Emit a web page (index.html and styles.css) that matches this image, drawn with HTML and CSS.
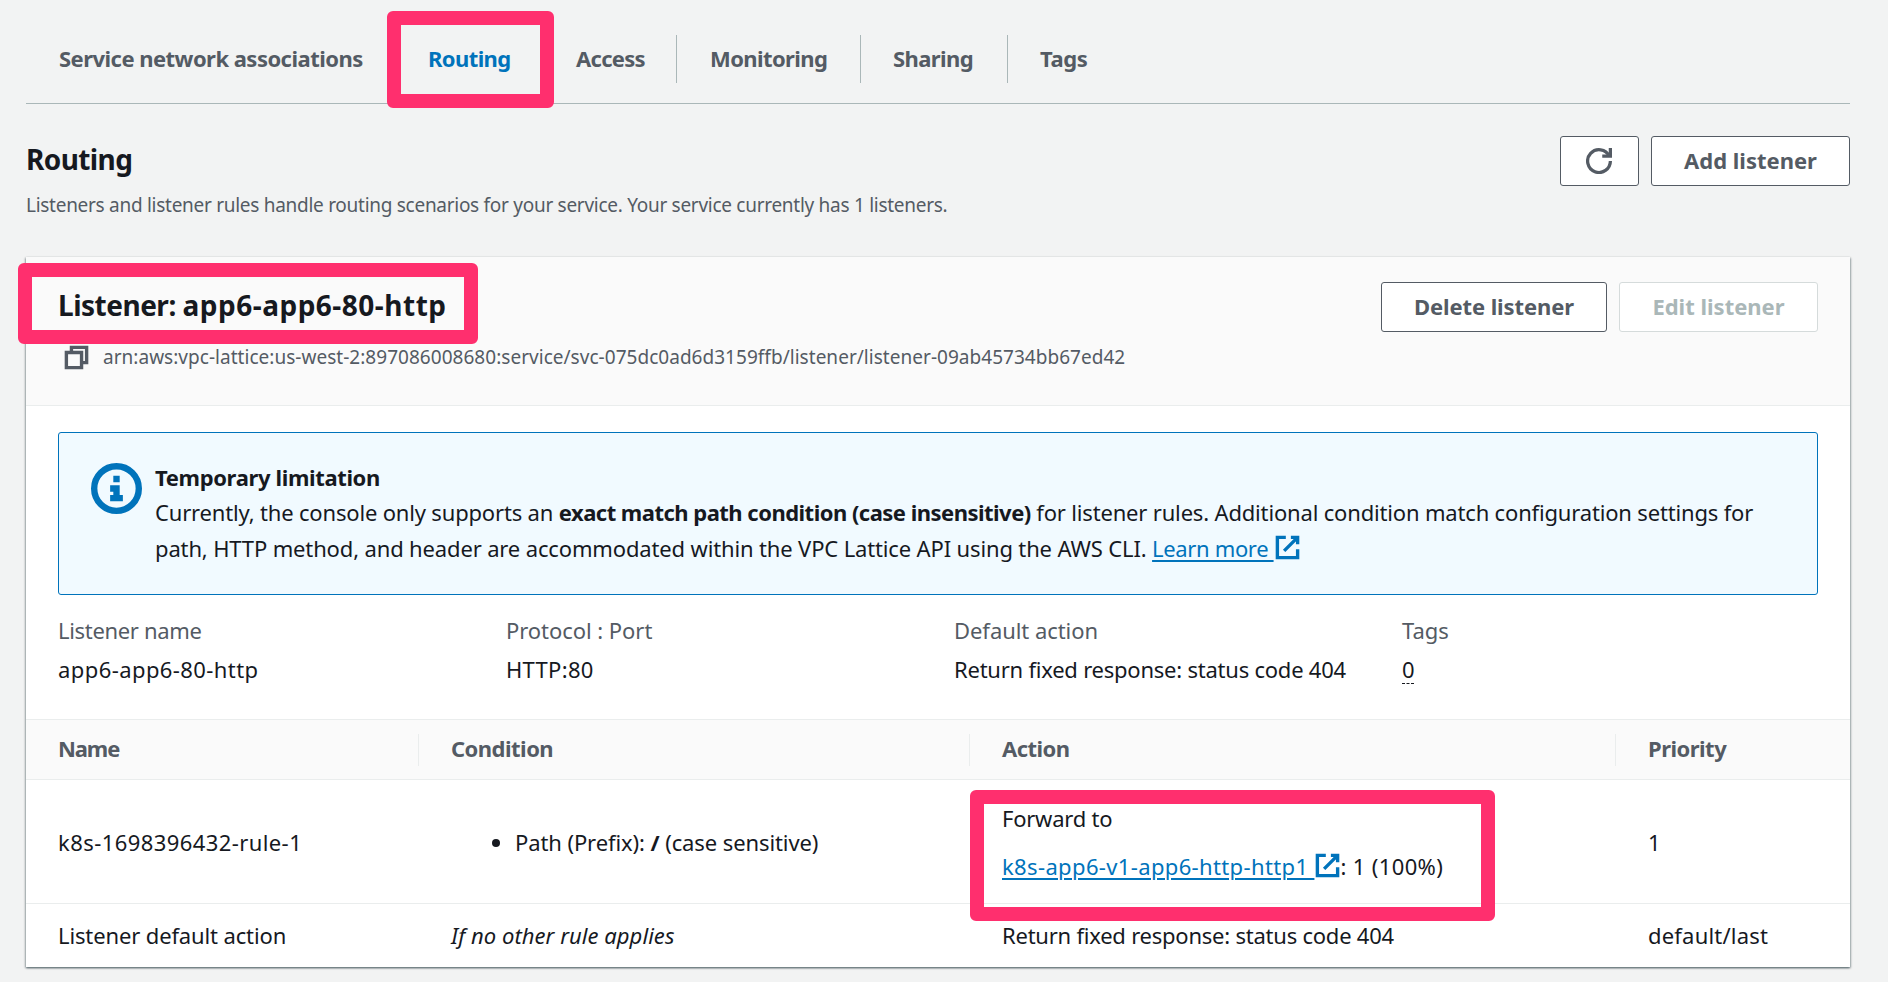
FILE: index.html
```html
<!DOCTYPE html>
<html lang="en">
<head>
<meta charset="utf-8">
<title>Routing</title>
<link rel="stylesheet" href="styles.css">
</head>
<body>
<main class="page">
  <nav class="tabs">
    <a class="tab tab-assoc">Service network associations</a>
    <a class="tab tab-routing active">Routing</a>
    <a class="tab tab-access">Access</a>
    <a class="tab tab-monitoring">Monitoring</a>
    <a class="tab tab-sharing">Sharing</a>
    <a class="tab tab-tags">Tags</a>
  </nav>

  <header class="page-header">
    <div>
      <h1 class="page-title">Routing</h1>
      <p class="page-desc">Listeners and listener rules handle routing scenarios for your service. Your service currently has 1 listeners.</p>
    </div>
    <div class="actions">
      <button class="btn btn-icon" aria-label="Refresh"><svg class="icon-refresh" viewBox="0 0 16 16"><path d="M10 5h5V0"/><path d="M15 8a7 7 0 1 1-.7-3"/></svg></button>
      <button class="btn btn-add">Add listener</button>
    </div>
  </header>

  <section class="panel">
    <header class="panel-header">
      <div>
        <h2 class="panel-title">Listener: <span class="panel-name">app6-app6-80-http</span></h2>
        <div class="arn"><svg class="icon-copy" viewBox="0 0 16 16"><path d="M2 5h9v9H2z"/><path d="M5 5V2h9v9h-3"/></svg><span class="arn-text">arn:aws:vpc-lattice:us-west-2:897086008680:service/svc-075dc0ad6d3159ffb/listener/listener-09ab45734bb67ed42</span></div>
      </div>
      <div class="actions">
        <button class="btn btn-delete">Delete listener</button>
        <button class="btn btn-edit" disabled>Edit listener</button>
      </div>
    </header>

    <div class="alert">
      <svg class="icon-info" viewBox="0 0 16 16"><circle cx="8" cy="8" r="7"/><path d="M8 11V8H6M10 11H6M8 6V4"/></svg>
      <div class="alert-body">
        <div class="alert-title">Temporary limitation</div>
        <div class="alert-line1">Currently, the console only supports an <b>exact match path condition (case insensitive)</b> for listener rules. Additional condition match configuration settings for</div>
        <div class="alert-line2">path, HTTP method, and header are accommodated within the VPC Lattice API using the AWS CLI. <a class="link">Learn more </a><svg class="icon-ext" viewBox="0 0 16 16"><path d="M10 2h4v4M6 10l8-8M14 9v5H2V2h5"/></svg></div>
      </div>
    </div>

    <dl class="details">
      <div><dt class="listener-label">Listener name</dt><dd class="code">app6-app6-80-http</dd></div>
      <div><dt>Protocol : Port</dt><dd class="port">HTTP:80</dd></div>
      <div><dt>Default action</dt><dd>Return fixed response: status code 404</dd></div>
      <div><dt>Tags</dt><dd><span class="tag-count">0</span></dd></div>
    </dl>

    <div class="table">
      <div class="row head">
        <div class="cell head-name">Name</div><div class="cell">Condition</div><div class="cell">Action</div><div class="cell">Priority</div>
      </div>
      <div class="row rule">
        <div class="cell code">k8s-1698396432-rule-1</div>
        <div class="cell"><ul class="conditions"><li>Path (Prefix): <b>/</b> (case sensitive)</li></ul></div>
        <div class="cell action"><div>Forward to</div><div class="target"><a class="link">k8s-app6-v1-app6-http-http1 </a><svg class="icon-ext" viewBox="0 0 16 16"><path d="M10 2h4v4M6 10l8-8M14 9v5H2V2h5"/></svg>: 1 (100%)</div></div>
        <div class="cell">1</div>
      </div>
      <div class="row default">
        <div class="cell default-name">Listener default action</div>
        <div class="cell default-condition"><i>If no other rule applies</i></div>
        <div class="cell">Return fixed response: status code 404</div>
        <div class="cell default-priority">default/last</div>
      </div>
    </div>
  </section>

  <div class="mark mark-tab"></div>
  <div class="mark mark-title"></div>
  <div class="mark mark-action"></div>
</main>
</body>
</html>
```
FILE: styles.css
```css
* { box-sizing: border-box; }
body {
  margin: 0;
  background: #f2f3f3;
  color: #16191f;
  font: 22px/35px "Noto Sans", "Open Sans", sans-serif;
  letter-spacing: -0.23px;
  white-space: nowrap;
}
h1, h2, p, dl, dd, ul { margin: 0; padding: 0; }
svg { fill: none; stroke: currentColor; stroke-width: 2; flex: none; }

.page { position: relative; height: 982px; padding: 0 38px 0 26px; overflow: hidden; }

.tabs { display: flex; height: 104px; padding-top: 35px; border-bottom: 1px solid #aab7b8; }
.tab { height: 48px; line-height: 46px; padding-left: 33px; color: #545b64; font-weight: 700; letter-spacing: -0.6px; border-right: 1px solid #aab7b8; }
.tab-assoc { width: 369px; letter-spacing: -0.53px; border-color: transparent; }
.tab-routing { width: 148px; }
.tab-access { width: 134px; letter-spacing: -0.7px; }
.tab-monitoring { width: 184px; }
.tab-sharing { width: 147px; padding-left: 32px; }
.tab-tags { padding-left: 32px; letter-spacing: -0.4px; border: 0; }
.tab.active { color: #0073bb; border-color: transparent; }

.page-header { display: flex; justify-content: space-between; height: 153px; padding-top: 32px; }
.page-title { font-size: 28px; line-height: 46px; letter-spacing: -0.6px; }
.page-desc { margin-top: 6px; font-size: 19px; line-height: 35px; letter-spacing: -0.28px; color: #545b64; }
.actions { display: flex; gap: 12px; }
.btn {
  height: 50px;
  padding: 0 0 2px;
  background: #fff;
  border: 1px solid #545b64;
  border-radius: 3px;
  color: #545b64;
  font: 700 22px/46px "Noto Sans", "Open Sans", sans-serif;
  letter-spacing: 0;
}
.btn-icon { width: 79px; display: flex; align-items: center; justify-content: center; padding: 0 2px 0 0; }
.btn-add, .btn-edit { width: 199px; }
.btn-delete { width: 226px; letter-spacing: -0.1px; }
.btn:disabled { color: #aab7b8; border-color: #d5dbdb; }
.icon-refresh { width: 26px; height: 26px; }

.panel { height: 710px; background: #fff; box-shadow: 0 1px 2px rgba(0, 28, 36, .5), 1px 1px 2px rgba(0, 28, 36, .2), -1px 1px 2px rgba(0, 28, 36, .2); }
.panel-header { display: flex; justify-content: space-between; height: 149px; padding: 25px 32px 0; background: #fafafa; border-bottom: 1px solid #eaeded; }
.panel-title { font-size: 28px; line-height: 47px; letter-spacing: -0.5px; }
.panel-name { letter-spacing: 0.5px; }
.arn { display: flex; align-items: center; height: 34px; padding-left: 5px; margin-top: 11px; font-size: 19px; letter-spacing: 0.03px; color: #545b64; }
.arn-text { margin-left: 13px; }
.icon-copy { width: 27px; height: 27px; }

.alert { display: flex; height: 163px; margin: 26px 32px 0; padding: 27px 0 0 32px; background: #f1faff; border: 1px solid #0073bb; border-radius: 3px; }
.icon-info { width: 51px; height: 51px; margin-top: 3px; color: #0073bb; }
.alert-body { margin-left: 13px; line-height: 35.3px; }
.alert-title { font-weight: 700; letter-spacing: -0.36px; }
.alert-line1 { letter-spacing: -0.17px; }
.alert-line1 b { letter-spacing: -0.52px; }
.alert-line2 { letter-spacing: -0.145px; }
.alert-line2 .link { letter-spacing: -0.35px; }
.link { color: #0073bb; text-decoration: underline; text-decoration-thickness: 2px; text-underline-offset: 3px; white-space: pre; }
.icon-ext { width: 27px; height: 27px; margin: 0 -1px 0 0; color: #0073bb; vertical-align: -4px; }

.details { display: grid; grid-template-columns: repeat(3, 448px) auto; height: 124px; padding: 18px 32px 0; }
.details dt { color: #545b64; letter-spacing: -0.05px; }
.details .listener-label { letter-spacing: -0.32px; }
.details dd { margin-top: 4px; }
.code { letter-spacing: 0.42px; }
.port { letter-spacing: 0.3px; }
.tag-count { display: inline-block; line-height: 27px; border-bottom: 1px dashed #16191f; }

.row { display: grid; grid-template-columns: 393px 551px 646px 1fr; align-items: center; border-bottom: 1px solid #eaeded; }
.cell { padding-left: 32px; }
.head { height: 61px; background: #fafafa; border-top: 1px solid #eaeded; color: #545b64; font-weight: 700; letter-spacing: -0.52px; }
.head .cell { height: 32px; line-height: 29px; border-right: 1px solid #eaeded; }
.head .cell:last-child { border: 0; }
.head .head-name { letter-spacing: -1.1px; }
.rule { height: 124px; padding-top: 1px; }
.conditions { padding-left: 64px; letter-spacing: -0.1px; }
.action { line-height: 48px; }
.target { letter-spacing: 0.36px; }
.default { height: 63px; border: 0; }
.default-name { letter-spacing: -0.13px; }
.default-condition { letter-spacing: 0.05px; }
.default-priority { letter-spacing: 0.2px; }

.mark { position: absolute; border: 14px solid #ff2f6e; border-radius: 6px; }
.mark-tab { left: 387px; top: 11px; width: 167px; height: 97px; }
.mark-title { left: 18px; top: 263px; width: 460px; height: 81px; }
.mark-action { left: 970px; top: 790px; width: 525px; height: 131px; }
```
